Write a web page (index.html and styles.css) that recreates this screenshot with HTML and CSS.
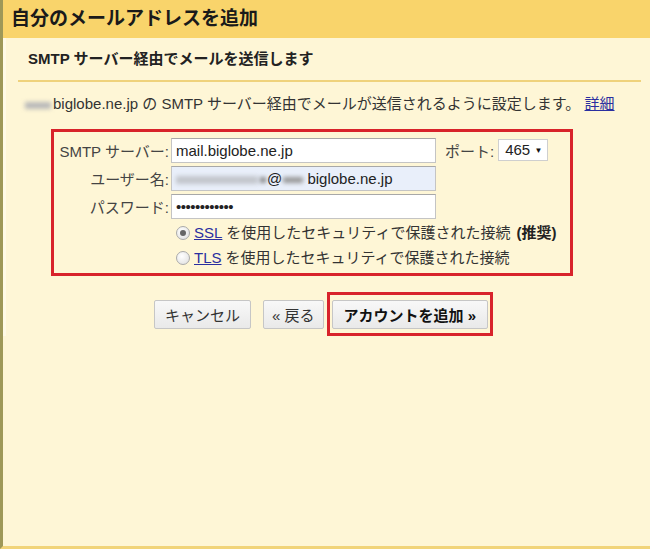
FILE: index.html
```html
<!DOCTYPE html>
<html lang="ja">
<head>
  <meta charset="UTF-8">
  <meta name="viewport" content="width=device-width, initial-scale=1.0">
  <title>自分のメールアドレスを追加</title>
  <link rel="stylesheet" href="styles.css">
</head>
<body>
  <div class="dialog">
    <div class="title-bar">自分のメールアドレスを追加</div>
    <div class="content">
      <div class="section-title">SMTP サーバー経由でメールを送信します</div>
      <p class="desc"><span class="blur blur-host"></span>biglobe.ne.jp の SMTP サーバー経由でメールが送信されるように設定します。 <a href="#">詳細</a></p>

      <div class="form-box">
        <div class="form-row">
          <label class="label">SMTP サーバー:</label>
          <div class="field">mail.biglobe.ne.jp</div>
          <span class="port-label">ポート:</span>
          <div class="select">465 <span class="arrow">▼</span></div>
        </div>
        <div class="form-row">
          <label class="label">ユーザー名:</label>
          <div class="field autofill"><span class="blur blur-user"></span><span class="blur blur-dot"></span>@<span class="blur blur-sub"></span> biglobe.ne.jp</div>
        </div>
        <div class="form-row">
          <label class="label">パスワード:</label>
          <div class="field password">••••••••••••</div>
        </div>
        <div class="radio-row">
          <span class="radio checked"></span>
          <a href="#">SSL</a> を使用したセキュリティで保護された接続 <strong>(推奨)</strong>
        </div>
        <div class="radio-row">
          <span class="radio"></span>
          <a href="#">TLS</a> を使用したセキュリティで保護された接続
        </div>
      </div>

      <div class="buttons">
        <button class="btn">キャンセル</button>
        <button class="btn back">« 戻る</button>
        <div class="btn-mark">
          <button class="btn primary">アカウントを追加 »</button>
        </div>
      </div>
    </div>
  </div>
</body>
</html>
```

FILE: styles.css
```css
body {
  margin: 0;
  font-family: "Liberation Sans", "Noto Sans CJK JP", sans-serif;
  background-color: #FEF6D6;
  color: #222;
}

.dialog {
  height: 546px;
  border-left: 3px solid #9E9858;
  border-bottom: 3px solid #F1D47A;
  background-color: #FEF6D6;
}

.title-bar {
  height: 38px;
  line-height: 38px;
  padding-left: 8px;
  background-color: #F9D46B;
  font-size: 19px;
  font-weight: bold;
  color: #1a1a1a;
}

.content {
  padding: 0 9px 0 12px;
  border-left: 3px solid #FFFAE6;
}

.section-title {
  height: 42px;
  line-height: 42px;
  padding-left: 10px;
  border-bottom: 2px solid #EFD27C;
  font-size: 15px;
  font-weight: bold;
}

.desc {
  margin: 12px 0 0;
  padding-left: 7px;
  line-height: 20px;
  font-size: 15px;
  color: #333;
}

.desc a,
.radio-row a {
  color: #2a2fa0;
}

.blur {
  display: inline-block;
  background-color: #b9b9b9;
  filter: blur(2px);
  vertical-align: middle;
}

.blur-host {
  width: 26px;
  height: 7px;
  margin-right: 2px;
}

.blur-user {
  width: 82px;
  height: 8px;
  background-color: #c2c6cc;
  margin-right: 2px;
}

.blur-dot {
  width: 6px;
  height: 6px;
  background-color: #888;
  margin-right: 1px;
}

.blur-sub {
  width: 20px;
  height: 6px;
  background-color: #999;
  margin-left: 1px;
}

.form-box {
  margin: 15px 0 0 33px;
  width: 516px;
  border: 3px solid #D8232B;
  padding: 4px 0 3px;
  font-size: 15px;
  color: #333;
}

.form-row {
  display: flex;
  align-items: center;
  height: 28px;
}

.label {
  width: 115px;
  margin-right: 2px;
  text-align: right;
  color: #444;
}

.field {
  width: 255px;
  height: 23px;
  line-height: 23px;
  padding: 0 4px;
  background-color: #fff;
  border: 1px solid #c4c4c4;
  border-top-color: #a8a8a8;
  color: #222;
  white-space: nowrap;
  overflow: hidden;
}

.field.autofill {
  background-color: #E9EFFA;
}

.field.password {
  font-size: 15px;
  letter-spacing: -0.5px;
}

.port-label {
  margin-left: 9px;
  color: #444;
}

.select {
  margin-left: 4px;
  width: 42px;
  height: 20px;
  line-height: 20px;
  padding-left: 6px;
  background-color: #fff;
  border: 1px solid #cfcfcf;
  color: #222;
}

.arrow {
  font-size: 8px;
  vertical-align: 2px;
  color: #111;
}

.radio-row {
  height: 25px;
  line-height: 25px;
  padding-left: 122px;
  display: flex;
  align-items: center;
  gap: 4px;
  white-space: nowrap;
}

.radio {
  width: 12px;
  height: 12px;
  border-radius: 50%;
  border: 1px solid #aaa;
  background: radial-gradient(circle at 40% 35%, #fff, #ddd);
  position: relative;
}

.radio.checked::after {
  content: "";
  position: absolute;
  left: 3px;
  top: 3px;
  width: 6px;
  height: 6px;
  border-radius: 50%;
  background-color: #666;
}

.radio-row strong {
  color: #222;
  margin-left: 2px;
}

.buttons {
  display: flex;
  justify-content: center;
  align-items: center;
  gap: 12px;
  margin-top: 16px;
  padding-right: 12px;
}

.btn {
  height: 29px;
  padding: 0 10px;
  font-family: inherit;
  font-size: 15px;
  color: #333;
  background: linear-gradient(#f8f8f8, #e9e9e9);
  border: 1px solid #c6c6c6;
  border-radius: 2px;
}

.btn.back {
  padding: 0 8px;
}

.btn.primary {
  font-weight: bold;
  color: #111;
  padding: 0 11px;
}

.btn-mark {
  margin-left: -9px;
  padding: 5px 2px 4px;
  border: 3px solid #D8232B;
}
```
